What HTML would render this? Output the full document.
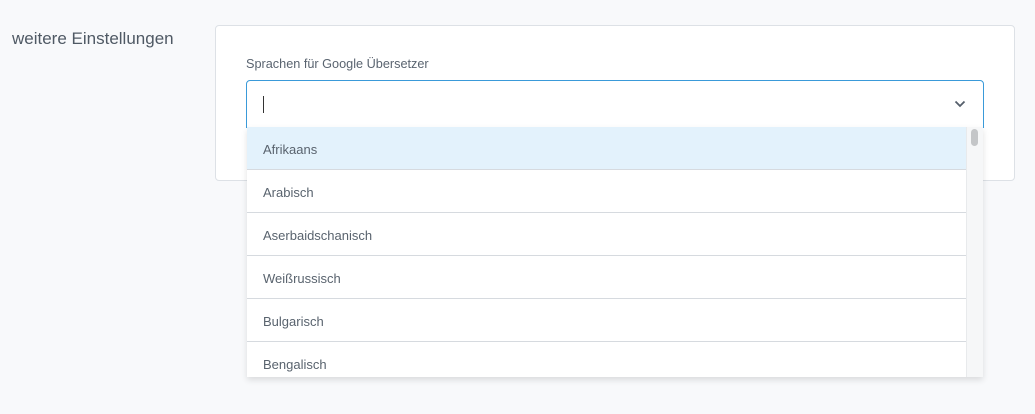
<!DOCTYPE html>
<html><head><meta charset="utf-8"><style>
body{margin:0;width:1035px;height:414px;background:#f8f9fb;font-family:"Liberation Sans",sans-serif;position:relative;overflow:hidden;color:#555f6b}
.lbl{position:absolute;left:12px;top:29px;font-size:17px;color:#4f5964}
.card{position:absolute;left:215px;top:25px;width:798px;height:154px;background:#fff;border:1px solid #dde1e6;border-radius:4px}
.fl{position:absolute;left:246px;top:57px;font-size:12.7px;color:#5a6470}
.inp{position:absolute;left:246px;top:80px;width:738px;height:48px;border:1px solid #3a9ad9;border-radius:4px 4px 0 0;background:#fff;box-sizing:border-box}
.cur{position:absolute;left:16px;top:15px;width:1px;height:17px;background:#333}
.chev{position:absolute;right:17px;top:19px}
.dd{position:absolute;left:247px;top:127px;width:736px;height:250px;background:#fff;box-shadow:0 3px 6px rgba(0,0,0,.12);overflow:hidden}
.row{height:43px;border-bottom:1px solid #d6dadf;width:720px;font-size:13px;line-height:45px;padding-left:16px;box-sizing:border-box;color:#59636e}
.row.h{background:#e3f2fc}
.sb{position:absolute;right:0;top:0;width:16px;height:250px;background:#f6f7f8;border-left:1px solid #e8eaec}
.th{position:absolute;left:4px;top:2px;width:7px;height:17px;border-radius:4px;background:#c4c6c8}
</style></head><body>
<div class="lbl">weitere Einstellungen</div>
<div class="card"></div>
<div class="fl">Sprachen für Google Übersetzer</div>
<div class="inp"><div class="cur"></div>
<svg class="chev" width="12" height="8" viewBox="0 0 12 8"><path d="M1.5 1.5L6 6l4.5-4.5" fill="none" stroke="#555f6b" stroke-width="1.8"/></svg></div>
<div class="dd">
<div class="row h">Afrikaans</div>
<div class="row">Arabisch</div>
<div class="row">Aserbaidschanisch</div>
<div class="row">Weißrussisch</div>
<div class="row">Bulgarisch</div>
<div class="row">Bengalisch</div>
<div class="sb"><div class="th"></div></div>
</div>
</body></html>
